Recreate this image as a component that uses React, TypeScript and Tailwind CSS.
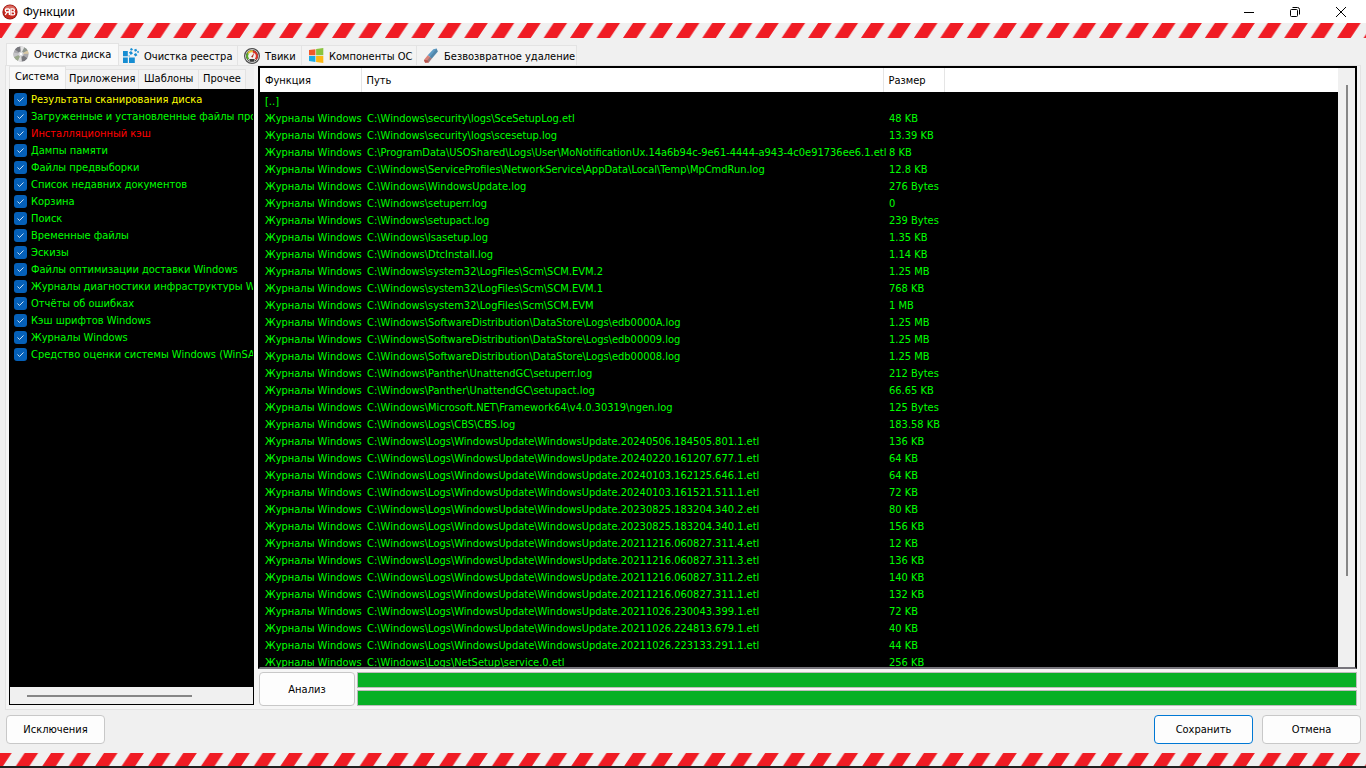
import React from "react";

const WU = "C:\\Windows\\Logs\\WindowsUpdate\\WindowsUpdate.";

const files: [string, string][] = [
  ["C:\\Windows\\security\\logs\\SceSetupLog.etl", "48 KB"],
  ["C:\\Windows\\security\\logs\\scesetup.log", "13.39 KB"],
  ["C:\\ProgramData\\USOShared\\Logs\\User\\MoNotificationUx.14a6b94c-9e61-4444-a943-4c0e91736ee6.1.etl", "8 KB"],
  ["C:\\Windows\\ServiceProfiles\\NetworkService\\AppData\\Local\\Temp\\MpCmdRun.log", "12.8 KB"],
  ["C:\\Windows\\WindowsUpdate.log", "276 Bytes"],
  ["C:\\Windows\\setuperr.log", "0"],
  ["C:\\Windows\\setupact.log", "239 Bytes"],
  ["C:\\Windows\\lsasetup.log", "1.35 KB"],
  ["C:\\Windows\\DtcInstall.log", "1.14 KB"],
  ["C:\\Windows\\system32\\LogFiles\\Scm\\SCM.EVM.2", "1.25 MB"],
  ["C:\\Windows\\system32\\LogFiles\\Scm\\SCM.EVM.1", "768 KB"],
  ["C:\\Windows\\system32\\LogFiles\\Scm\\SCM.EVM", "1 MB"],
  ["C:\\Windows\\SoftwareDistribution\\DataStore\\Logs\\edb0000A.log", "1.25 MB"],
  ["C:\\Windows\\SoftwareDistribution\\DataStore\\Logs\\edb00009.log", "1.25 MB"],
  ["C:\\Windows\\SoftwareDistribution\\DataStore\\Logs\\edb00008.log", "1.25 MB"],
  ["C:\\Windows\\Panther\\UnattendGC\\setuperr.log", "212 Bytes"],
  ["C:\\Windows\\Panther\\UnattendGC\\setupact.log", "66.65 KB"],
  ["C:\\Windows\\Microsoft.NET\\Framework64\\v4.0.30319\\ngen.log", "125 Bytes"],
  ["C:\\Windows\\Logs\\CBS\\CBS.log", "183.58 KB"],
  [WU + "20240506.184505.801.1.etl", "136 KB"],
  [WU + "20240220.161207.677.1.etl", "64 KB"],
  [WU + "20240103.162125.646.1.etl", "64 KB"],
  [WU + "20240103.161521.511.1.etl", "72 KB"],
  [WU + "20230825.183204.340.2.etl", "80 KB"],
  [WU + "20230825.183204.340.1.etl", "156 KB"],
  [WU + "20211216.060827.311.4.etl", "12 KB"],
  [WU + "20211216.060827.311.3.etl", "136 KB"],
  [WU + "20211216.060827.311.2.etl", "140 KB"],
  [WU + "20211216.060827.311.1.etl", "132 KB"],
  [WU + "20211026.230043.399.1.etl", "72 KB"],
  [WU + "20211026.224813.679.1.etl", "40 KB"],
  [WU + "20211026.223133.291.1.etl", "44 KB"],
  ["C:\\Windows\\Logs\\NetSetup\\service.0.etl", "256 KB"],
];

const options: [string, string][] = [
  ["Результаты сканирования диска", "text-[#ffff00]"],
  ["Загруженные и установленные файлы программ", "text-[#00ff00]"],
  ["Инсталляционный кэш", "text-[#ff0000]"],
  ["Дампы памяти", "text-[#00ff00]"],
  ["Файлы предвыборки", "text-[#00ff00]"],
  ["Список недавних документов", "text-[#00ff00]"],
  ["Корзина", "text-[#00ff00]"],
  ["Поиск", "text-[#00ff00]"],
  ["Временные файлы", "text-[#00ff00]"],
  ["Эскизы", "text-[#00ff00]"],
  ["Файлы оптимизации доставки Windows", "text-[#00ff00]"],
  ["Журналы диагностики инфраструктуры Windows", "text-[#00ff00]"],
  ["Отчёты об ошибках", "text-[#00ff00]"],
  ["Кэш шрифтов Windows", "text-[#00ff00]"],
  ["Журналы Windows", "text-[#00ff00]"],
  ["Средство оценки системы Windows (WinSAT)", "text-[#00ff00]"],
];

function Stripes({ id, className }: { id: string; className: string }) {
  return (
    <svg className={className} aria-hidden="true">
      <defs>
        <pattern id={id} width="26.45" height="15" patternUnits="userSpaceOnUse">
          <path d="M-1.8 0H11.7L1.7 15H-11.8ZM24.6 0H38.1L28.1 15H14.6Z" fill="#f01c24" />
        </pattern>
      </defs>
      <rect width="100%" height="100%" fill={`url(#${id})`} />
    </svg>
  );
}

function AppIcon() {
  return (
    <svg viewBox="0 0 16 16" className="size-4" aria-hidden="true">
      <circle cx="8" cy="8" r="7.6" fill="#8e1712" />
      <circle cx="8" cy="7.8" r="6.9" fill="#c92a20" />
      <path d="M2 6a6.3 6.3 0 0 1 12 0Q8 3 2 6Z" fill="#d8695f" />
      <path d="M7.4 4.9v6M7.4 5H4.8a1.4 1.4 0 0 0 0 3h2.6M5.2 8l-2 2.9M9 4.9v6h2.2a1.5 1.5 0 0 0 0-3H9h1.9a1.4 1.4 0 0 0 0-3Z" fill="none" stroke="#fff" strokeWidth="1.3" />
    </svg>
  );
}

function DiscIcon() {
  return (
    <svg viewBox="0 0 16 16" className="size-4 shrink-0" aria-hidden="true">
      <circle cx="8" cy="8" r="7.6" fill="#aaa9ad" />
      <path d="M8 8 2 3.4A7.6 7.6 0 0 1 7.4.5Z" fill="#77777d" />
      <path d="M8 8 7.4.5a7.6 7.6 0 0 1 4 .9Z" fill="#e4e4e4" />
      <path d="m8 8 3.4-6.6a7.6 7.6 0 0 1 3.3 3.2Z" fill="#8f978f" />
      <path d="m8 8 6.7-3.4a7.6 7.6 0 0 1 .9 3.2Z" fill="#d9c9a4" />
      <path d="m8 8 6.4 4.2a7.6 7.6 0 0 1-5.6 3.4Z" fill="#77777c" />
      <path d="m8 8 .8 7.6a7.6 7.6 0 0 1-4-.8Z" fill="#dedede" />
      <path d="m8 8-3.2 6.8A7.6 7.6 0 0 1 1 11Z" fill="#9aa88a" />
      <path d="M8 8 .9 11A7.6 7.6 0 0 1 .6 6.5Z" fill="#c5c5c8" />
      <circle cx="8" cy="8" r="2.6" fill="#d8d8da" />
      <circle cx="8" cy="8" r="1.2" fill="#fff" />
    </svg>
  );
}

function RegistryIcon() {
  return (
    <svg viewBox="0 0 16 16" className="size-4 shrink-0" fill="#168dd2" aria-hidden="true">
      <path d="M0 3h4.8v5.2H0ZM0 9.5h4.8V15H0ZM6 9.5h5.8V15H6ZM5.9 4.5 8 3l2 2.2-2.2 1.9ZM6.9.9 8.8 0 10 1.7l-2 1ZM11 1.7l2.2-.9 1 2-2.2.9ZM10.8 6.2l2.2-1.2 1.4 2.3L12.2 8.6ZM14 3.6l1.5-.8.5 1.7-1.3.6ZM5.7 7.2l1.6.8-1.6.8Z" />
    </svg>
  );
}

function GaugeIcon() {
  return (
    <svg viewBox="0 0 16 16" className="size-4 shrink-0" aria-hidden="true">
      <circle cx="8" cy="8" r="7.4" fill="#efefef" stroke="#4d4d4d" strokeWidth="1.2" />
      <circle cx="8" cy="8" r="6.1" fill="#333" />
      <circle cx="8" cy="8" r="5.3" fill="#f2f2ee" />
      <path d="M4.4 11.2a4.7 4.7 0 0 1-.2-6" fill="none" stroke="#5aaa2a" strokeWidth="2" />
      <path d="M4.2 5.2A4.7 4.7 0 0 1 8.8 3.4" fill="none" stroke="#e8c62e" strokeWidth="2" />
      <path d="M8.8 3.4a4.7 4.7 0 0 1 2.8 7.8" fill="none" stroke="#dc3225" strokeWidth="2" />
      <path d="m10.2 4.6-1.3 5-1.8-.6Z" fill="#b72a20" />
      <path d="M5.2 11h5.6l-1 2.2H6.2Z" fill="#3b3b3b" />
    </svg>
  );
}

function WindowsIcon() {
  return (
    <svg viewBox="0 0 16 16" className="size-4 shrink-0" aria-hidden="true">
      <path d="m1 2.1 6.4-.9v6H1Z" fill="#f1582a" />
      <path d="m8.1 1.1 7.2-1v7.1H8.1Z" fill="#8ac43f" />
      <path d="M1 7.9h6.4v6L1 13Z" fill="#1cace5" />
      <path d="M8.1 7.9h7.2V15l-7.2-1Z" fill="#fdb813" />
    </svg>
  );
}

function EraserIcon() {
  return (
    <svg viewBox="0 0 16 16" className="size-4 shrink-0" aria-hidden="true">
      <path d="M10.3 1.2 13.6.5l1.2 3-6 7-4.1-3.2Z" fill="#5f9cc5" />
      <path d="m4.7 7.3 4.1 3.2-3.1 4-3.6.3-1.2-2.8Z" fill="#d98278" />
      <path d="m13.6.5 1.2 3-9.1 11-1.2-2.4Z" fill="#3c6685" fillOpacity=".4" />
      <path d="m1 12 3.8.2.9 2.3-3.6.3Z" fill="#b6564e" />
    </svg>
  );
}

const edge = "border-[#e3e3e3]";

function Tab({ active, icon, label, className }: { active?: boolean; icon?: React.ReactNode; label: string; className: string }) {
  return (
    <button
      role="tab"
      aria-selected={!!active}
      className={`flex shrink-0 items-center whitespace-nowrap border-t border-r ${edge} ${
        active ? "h-full border-l bg-[#f9f9f9]" : "h-[20px] bg-[#f3f3f3]"
      } ${className}`}
    >
      {icon}
      {label}
    </button>
  );
}

export default function App() {
  return (
    <div className="flex h-screen flex-col overflow-hidden bg-[#f0f0f0] font-['DejaVu_Sans_Condensed','DejaVu_Sans',sans-serif] text-[11px] leading-[17px] text-black">
      <header className="flex h-[23px] shrink-0 items-center bg-white pl-0.5">
        <AppIcon />
        <h1 className="ml-[5px] flex-1 font-['Noto_Sans',sans-serif] text-[12px]">Функции</h1>
        <button aria-label="Свернуть" className="flex w-[46px] justify-center">
          <svg viewBox="0 0 10 10" className="size-2.5" stroke="#000"><path d="M0 5.5h10" /></svg>
        </button>
        <button aria-label="Развернуть" className="flex w-[46px] justify-center">
          <svg viewBox="0 0 10 10" className="size-2.5" fill="none" stroke="#000">
            <rect x=".5" y="2.5" width="7" height="7" rx="1" />
            <path d="M2.5.5h5a2 2 0 0 1 2 2v5" />
          </svg>
        </button>
        <button aria-label="Закрыть" className="flex w-[46px] justify-center">
          <svg viewBox="0 0 10 10" className="size-2.5" stroke="#000"><path d="m0 0 10 10M10 0 0 10" /></svg>
        </button>
        <span className="w-0.5" />
      </header>
      <Stripes id="stripes-top" className="h-[15px] w-full shrink-0" />

      <div role="tablist" className="mt-[5px] flex h-[22px] shrink-0 items-end pl-1.5">
        <Tab active icon={<DiscIcon />} label="Очистка диска" className="w-[113px] gap-[5px] pb-px pl-1.5" />
        <Tab icon={<RegistryIcon />} label="Очистка реестра" className="w-[119px] gap-[5px] pt-px pl-1" />
        <Tab icon={<GaugeIcon />} label="Твики" className="w-[64px] gap-[5px] pt-px pl-1.5" />
        <Tab icon={<WindowsIcon />} label="Компоненты ОС" className="w-[115px] gap-[5px] pt-px pl-1.5" />
        <Tab icon={<EraserIcon />} label="Безвозвратное удаление" className="w-[160px] gap-[5px] pt-px pl-1.5" />
      </div>

      <main className={`ml-[5px] mr-[5px] flex min-h-0 flex-1 gap-[4px] border ${edge} bg-[#f5f5f5] pb-[3px] pl-[3px] pr-[3px]`}>
        <section className="mb-px flex w-[245px] shrink-0 flex-col">
          <div role="tablist" className="flex h-[23px] shrink-0 items-end bg-[#f0f0f0]">
            <Tab active label="Система" className="w-[57px] pb-[3px] pl-[5px]" />
            <Tab label="Приложения" className="w-[73px] pb-0.5 pl-[3px]" />
            <Tab label="Шаблоны" className="w-[60px] pb-0.5 pl-[5px]" />
            <Tab label="Прочее" className="w-[47px] pb-0.5 pl-[4px]" />
          </div>
          <div className="flex min-h-0 flex-1 flex-col border border-black bg-black">
            <ul className="min-h-0 flex-1 overflow-hidden pt-px pl-1">
              {options.map(([name, color]) => (
                <li key={name}>
                  <label className={`flex h-[17px] items-center gap-1 whitespace-nowrap ${color}`}>
                    <span className="relative flex size-[13px] shrink-0">
                      <input type="checkbox" defaultChecked className="size-[13px] appearance-none rounded-[3px] bg-[#0560b8]" />
                      <svg viewBox="0 0 13 13" className="pointer-events-none absolute inset-0 size-[13px]" fill="none" stroke="#c5e0f7" aria-hidden="true">
                        <path d="m3.5 6.5 2 2 4-4" />
                      </svg>
                    </span>
                    <span className="min-w-0 flex-1 overflow-hidden">{name}</span>
                  </label>
                </li>
              ))}
            </ul>
            <div className="flex h-[17px] shrink-0 items-center bg-[#f0f0f0] pl-[17px]">
              <div className="h-0.5 w-[165px] bg-[#868686]" />
            </div>
          </div>
        </section>

        <section className="flex min-w-0 flex-1 flex-col">
          <div className="flex min-h-0 flex-1 border-2 border-t-black border-r-black border-b-[#77757c] border-l-black bg-black">
            <div className="min-w-0 flex-1 overflow-hidden">
              <table className="w-full table-fixed border-collapse whitespace-nowrap text-left">
                <colgroup>
                  <col className="w-[101px]" />
                  <col className="w-[522px]" />
                  <col className="w-[61px]" />
                  <col />
                </colgroup>
                <thead className="bg-white">
                  <tr className="h-[24px]">
                    <th className="border-r border-[#e5e5e5] p-0 pl-[5px] font-normal">Функция</th>
                    <th className="border-r border-[#e5e5e5] p-0 pl-[5px] font-normal">Путь</th>
                    <th className="border-r border-[#e5e5e5] p-0 pl-[5px] font-normal">Размер</th>
                    <td />
                  </tr>
                </thead>
                <tbody className="leading-[15px] text-[#00ff00]">
                  <tr className="h-[17px]">
                    <td className="p-0 pt-0.5 pl-[5px]">[..]</td>
                    <td />
                    <td />
                    <td />
                  </tr>
                  {files.map(([path, size]) => (
                    <tr key={path} className="h-[17px]">
                      <td className="p-0 pt-0.5 pl-[5px]">Журналы Windows</td>
                      <td className="p-0 pt-0.5 pl-1.5">{path}</td>
                      <td className="p-0 pt-0.5 pl-1.5">{size}</td>
                      <td />
                    </tr>
                  ))}
                </tbody>
              </table>
            </div>
            <div className="flex w-[17px] shrink-0 flex-col items-center bg-[#f0f0f0] pt-[17px]">
              <div className="h-[491px] w-0.5 bg-[#868686]" />
            </div>
          </div>
          <div className="mt-[3px] flex h-[34px] shrink-0 gap-0.5 pl-px">
            <button className="w-[96px] rounded border border-[#c8c8c8] bg-[#fdfdfd]">Анализ</button>
            <div className="flex flex-1 flex-col gap-0.5">
              <div role="progressbar" aria-label="Общий ход" aria-valuenow={100} className="flex-1 border border-[#bcbcbc] bg-[#06b025]" />
              <div role="progressbar" aria-label="Ход операции" aria-valuenow={100} className="flex-1 border border-[#bcbcbc] bg-[#06b025]" />
            </div>
          </div>
        </section>
      </main>

      <footer className="flex h-[43px] shrink-0 items-start gap-[9px] pt-[5px] pr-[5px] pl-1.5">
        <button className="h-[29px] w-[99px] rounded border border-[#c8c8c8] bg-[#fdfdfd]">Исключения</button>
        <span className="flex-1" />
        <button className="h-[29px] w-[99px] rounded border border-[#0078d4] bg-[#fdfdfd]">Сохранить</button>
        <button className="h-[29px] w-[99px] rounded border border-[#c8c8c8] bg-[#fdfdfd]">Отмена</button>
      </footer>
      <Stripes id="stripes-bottom" className="h-[13px] w-full shrink-0" />
      <div className="h-0.5 shrink-0 bg-[#202020]" />
    </div>
  );
}
